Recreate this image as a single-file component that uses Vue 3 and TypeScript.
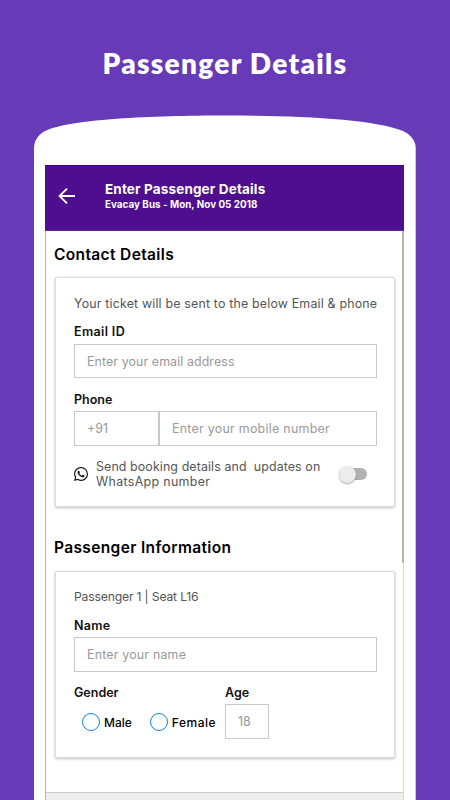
<script setup lang="ts">
import { ref } from 'vue'

const email = ref('')
const phone = ref('')
const name = ref('')
const age = ref('')
const whatsappUpdates = ref(false)
const genders: string[] = ['Male', 'Female']
const gender = ref('')
</script>

<template>
  <main class="page">
    <h1 class="title"><span>Passenger Details</span></h1>
    <div class="phone">
      <div class="screen">
        <header class="bar">
          <svg class="back" viewBox="0 0 18 18" width="18" height="18">
            <path d="M17 9H2M9 1.6L1.6 9L9 16.4" fill="none" stroke="#fff" stroke-width="1.9" />
          </svg>
          <div class="bar-text">
            <div class="bar-title"><span>Enter Passenger Details</span></div>
            <div class="bar-sub"><span>Evacay Bus - Mon, Nov 05 2018</span></div>
          </div>
        </header>
        <div class="content">
          <h2 class="h-contact"><span>Contact Details</span></h2>
          <section class="card contact">
            <p class="intro"><span>Your ticket will be sent to the below Email &amp; phone</span></p>
            <div class="label l-email"><span>Email ID</span></div>
            <input v-model="email" class="field f-email" placeholder="Enter your email address" />
            <div class="label l-phone"><span>Phone</span></div>
            <div class="phone-row">
              <input class="field code" placeholder="+91" />
              <input v-model="phone" class="field number" placeholder="Enter your mobile number" />
            </div>
            <div class="whatsapp">
              <svg viewBox="0 0 24 24" width="14" height="14">
                <path
                  fill="#111"
                  d="M17.472 14.382c-.297-.149-1.758-.867-2.03-.967-.273-.099-.471-.148-.67.15-.197.297-.767.966-.94 1.164-.173.199-.347.223-.644.075-.297-.15-1.255-.463-2.39-1.475-.883-.788-1.48-1.761-1.653-2.059-.173-.297-.018-.458.13-.606.134-.133.298-.347.446-.52.149-.174.198-.298.298-.497.099-.198.05-.371-.025-.52-.075-.149-.669-1.612-.916-2.207-.242-.579-.487-.5-.669-.51-.173-.008-.371-.01-.57-.01-.198 0-.52.074-.792.372-.272.297-1.04 1.016-1.04 2.479 0 1.462 1.065 2.875 1.213 3.074.149.198 2.096 3.2 5.077 4.487.709.306 1.262.489 1.694.625.712.227 1.36.195 1.871.118.571-.085 1.758-.719 2.006-1.413.248-.694.248-1.289.173-1.413-.074-.124-.272-.198-.57-.347m-5.421 7.403h-.004a9.87 9.87 0 01-5.031-1.378l-.361-.214-3.741.982.998-3.648-.235-.374a9.86 9.86 0 01-1.51-5.26c.001-5.45 4.436-9.884 9.888-9.884 2.64 0 5.122 1.03 6.988 2.898a9.825 9.825 0 012.893 6.994c-.003 5.45-4.437 9.884-9.885 9.884m8.413-18.297A11.815 11.815 0 0012.05 0C5.495 0 .16 5.335.157 11.892c0 2.096.547 4.142 1.588 5.945L.057 24l6.305-1.654a11.882 11.882 0 005.683 1.448h.005c6.554 0 11.89-5.335 11.893-11.893a11.821 11.821 0 00-3.48-8.413Z"
                />
              </svg>
              <p class="wa-text">
                <span class="wa-1">Send booking details and&nbsp; updates on</span><br />
                <span class="wa-2">WhatsApp number</span>
              </p>
              <button
                class="toggle"
                :class="{ on: whatsappUpdates }"
                type="button"
                @click="whatsappUpdates = !whatsappUpdates"
              >
                <i class="thumb"></i>
              </button>
            </div>
          </section>
          <h2 class="h-info"><span>Passenger Information</span></h2>
          <section class="card info">
            <p class="seat"><span>Passenger 1 | Seat L16</span></p>
            <div class="label l-name"><span>Name</span></div>
            <input v-model="name" class="field f-name" placeholder="Enter your name" />
            <div class="split">
              <div class="gender">
                <div class="label l-gender"><span>Gender</span></div>
                <div class="radios">
                  <label v-for="g in genders" :key="g" class="radio" @click="gender = g">
                    <i class="circle" :class="{ picked: gender === g }"></i>
                    <span>{{ g }}</span>
                  </label>
                </div>
              </div>
              <div class="age">
                <div class="label l-age"><span>Age</span></div>
                <input v-model="age" class="field f-age" placeholder="18" />
              </div>
            </div>
          </section>
        </div>
        <footer class="foot"></footer>
        <i class="scroll"></i>
      </div>
    </div>
  </main>
</template>

<style>
body {
  background: #673ab7;
}
</style>

<style scoped>
* {
  box-sizing: border-box;
}
h1,
h2,
p {
  margin: 0;
}
.page {
  height: 800px;
  overflow: hidden;
  background: #673ab7;
  font-family: Inter, 'Liberation Sans', sans-serif;
  color: #111;
  white-space: nowrap;
}
.title {
  height: 115px;
  padding-top: 43px;
  line-height: 40px;
  text-align: center;
  color: #fff;
  font-family: Lato, sans-serif;
  font-weight: 800;
  font-size: 28px;
  letter-spacing: 1.3px;
}
.phone {
  width: 382px;
  height: 685px;
  margin-left: 34px;
  padding: 50px 12px 0 11px;
  background: #fff;
  clip-path: path('M0 685V33C0 26 4 20 11 16C36 4 118 0.5 191 0.5C264 0.5 340 4 369 16C377 20 381.7 26 381.7 33V685Z');
}
.screen {
  position: relative;
  display: flex;
  flex-direction: column;
  height: 635px;
  border-left: 1px solid #b9a9dc;
  border-right: 1px solid #dcdaea;
}
.bar {
  display: flex;
  align-items: flex-start;
  height: 66px;
  margin: 0 -1px;
  padding-left: 13px;
  background: #4f0e8f;
  border-top: 1px solid #3d0782;
  border-bottom: 1px solid #5f2799;
  color: #fff;
}
.back {
  margin-top: 21px;
}
.bar-text {
  margin: 15px 0 0 29px;
}
.bar-title {
  font-size: 13.5px;
  font-weight: 700;
  line-height: 17px;
  letter-spacing: 0.15px;
}
.bar-sub {
  font-size: 9.8px;
  font-weight: 700;
  line-height: 14px;
  letter-spacing: 0.05px;
}
.content {
  height: 561px;
  padding: 13px 8px 0 9px;
}
h2 {
  height: 20px;
  margin-left: -1px;
  line-height: 21px;
  font-size: 15.5px;
  font-weight: 600;
  color: #000;
  letter-spacing: 0.36px;
}
.card {
  width: 340px;
  padding: 0 17px 0 18px;
  border: 1px solid #dcdcdc;
  border-radius: 2px;
  box-shadow: 0 1px 3px rgba(0, 0, 0, 0.25);
  background: #fff;
}
.contact {
  height: 230px;
  margin-top: 13px;
}
.info {
  height: 187px;
  margin-top: 14px;
}
.h-info {
  margin-top: 30px;
  line-height: 22px;
}
.intro,
.seat {
  padding-top: 17px;
  line-height: 16px;
  font-size: 12.4px;
  color: #555;
}
.intro {
  padding-top: 18px;
  letter-spacing: 0.18px;
}
.seat {
  font-size: 12.2px;
  letter-spacing: -0.18px;
}
.label {
  height: 16px;
  line-height: 16px;
  font-size: 12.5px;
  font-weight: 600;
}
.l-email,
.l-name {
  margin-top: 12px;
}
.l-email {
  letter-spacing: 0.36px;
}
.l-name {
  line-height: 18px;
  letter-spacing: 0.25px;
}
.l-phone,
.l-gender,
.l-age {
  line-height: 18px;
}
.field {
  display: block;
  width: 303px;
  height: 35px;
  padding: 0 0 0 12px;
  border: 1px solid #c8c8c8;
  border-radius: 0;
  background: #fff;
  outline: none;
  font-family: inherit;
  font-size: 12.4px;
}
.field::placeholder {
  color: #999;
  opacity: 1;
}
.f-email {
  height: 34px;
  margin-top: 4px;
  letter-spacing: 0.1px;
}
.l-phone {
  margin-top: 13px;
}
.phone-row {
  display: flex;
  margin-top: 4px;
}
.code {
  width: 85px;
}
.number {
  width: 218px;
  letter-spacing: 0.28px;
}
.whatsapp {
  display: flex;
  align-items: center;
  height: 30px;
  margin-top: 13px;
}
.wa-text {
  width: 243px;
  margin-left: 8px;
  line-height: 15px;
  font-size: 12.4px;
  color: #555;
}
.wa-1 {
  letter-spacing: 0.11px;
}
.wa-2 {
  letter-spacing: 0.34px;
}
.toggle {
  display: flex;
  align-items: center;
  width: 28px;
  height: 12px;
  padding: 0;
  border: 0;
  border-radius: 6px;
  background: #b1b1b1;
}
.thumb {
  width: 17px;
  height: 17px;
  flex: none;
  border-radius: 50%;
  background: #ececec;
  box-shadow: 0 1px 2px rgba(0, 0, 0, 0.35);
}
.toggle.on .thumb {
  margin-left: 11px;
}
.f-name {
  margin-top: 4px;
  letter-spacing: 0.2px;
}
.split {
  display: flex;
  margin-top: 12px;
}
.gender {
  width: 151px;
}
.radios {
  display: flex;
  gap: 18px;
  padding: 13px 0 0 8px;
}
.radio {
  display: flex;
  align-items: center;
  gap: 4px;
  height: 18px;
  font-size: 12px;
  font-weight: 500;
  color: #000;
}
.radio + .radio {
  letter-spacing: 0.5px;
}
.circle {
  width: 18px;
  height: 18px;
  flex: none;
  border: 1px solid #1683d8;
  border-radius: 50%;
}
.circle.picked {
  background: radial-gradient(#1683d8 40%, transparent 45%);
}
.f-age {
  width: 44px;
  margin-top: 4px;
}
.foot {
  height: 8px;
  border-top: 1px solid #ccc;
  background: #eee;
}
.scroll {
  position: absolute;
  top: 66px;
  right: -1px;
  width: 2px;
  height: 332px;
  background: #b6b5ba;
}
</style>
